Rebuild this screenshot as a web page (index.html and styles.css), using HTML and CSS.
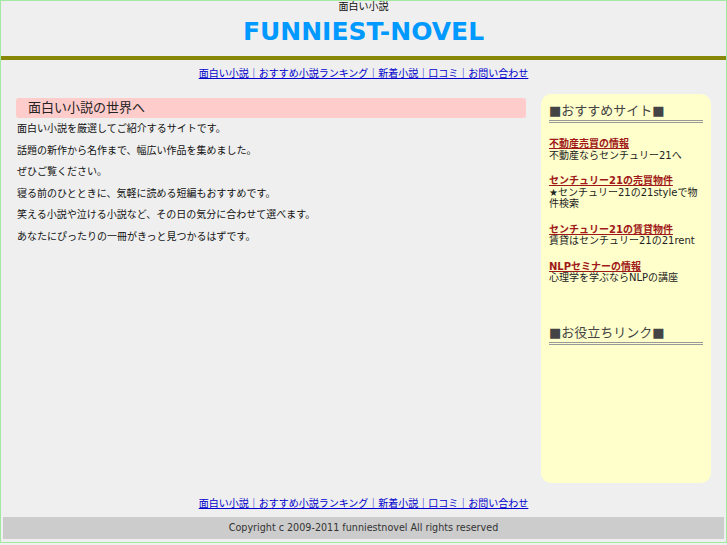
FILE: index.html
```html
<!DOCTYPE html>
<html lang="ja">
<head>
<meta charset="utf-8">
<title>FUNNIEST-NOVEL</title>
<link rel="stylesheet" href="styles.css">
</head>
<body>
<div class="page">
  <header class="header">
    <h1 class="tagline">面白い小説</h1>
    <div class="logo">FUNNIEST-NOVEL</div>
  </header>
  <div class="rule"></div>
  <nav class="nav"><a href="#">面白い小説｜おすすめ小説ランキング｜新着小説｜口コミ｜お問い合わせ</a></nav>
  <div class="content">
    <main class="main">
      <h2 class="main-title">面白い小説の世界へ</h2>
      <p class="text">面白い小説を厳選してご紹介するサイトです。</p>
      <p class="text">話題の新作から名作まで、幅広い作品を集めました。</p>
      <p class="text">ぜひご覧ください。</p>
      <p class="text">寝る前のひとときに、気軽に読める短編もおすすめです。</p>
      <p class="text">笑える小説や泣ける小説など、その日の気分に合わせて選べます。</p>
      <p class="text">あなたにぴったりの一冊がきっと見つかるはずです。</p>
    </main>
    <aside class="side">
      <section class="side-box">
        <h3 class="side-title">■おすすめサイト■</h3>
        <ul class="links">
          <li class="link-item"><a class="link-title" href="#">不動産売買の情報</a><br>不動産ならセンチュリー21へ</li>
          <li class="link-item"><a class="link-title" href="#">センチュリー21の売買物件</a><br>★センチュリー21の21styleで物件検索</li>
          <li class="link-item"><a class="link-title" href="#">センチュリー21の賃貸物件</a><br>賃貸はセンチュリー21の21rent</li>
          <li class="link-item"><a class="link-title" href="#">NLPセミナーの情報</a><br>心理学を学ぶならNLPの講座</li>
        </ul>
      </section>
      <section class="side-box side-box-second">
        <h3 class="side-title">■お役立ちリンク■</h3>
      </section>
    </aside>
  </div>
  <div class="foot-nav"><a href="#">面白い小説｜おすすめ小説ランキング｜新着小説｜口コミ｜お問い合わせ</a></div>
  <footer class="copyright">Copyright c 2009-2011 funniestnovel All rights reserved</footer>
</div>
</body>
</html>
```
FILE: styles.css
```css
html, body {
  margin: 0;
  padding: 0;
  background: #efefef;
}
body {
  font-family: "DejaVu Sans", "Noto Sans CJK JP", sans-serif;
  color: #111;
}
.page {
  box-sizing: border-box;
  width: 727px;
  border: 1px solid #a3e8a3;
  background: #efefef;
}
.header {
  text-align: center;
}
.tagline {
  margin: 0;
  font-size: 10px;
  line-height: 12px;
  font-weight: normal;
  color: #111;
}
.logo {
  margin-top: 4px;
  font-size: 25px;
  line-height: 30px;
  font-weight: bold;
  color: #0099ff;
}
.rule {
  margin-top: 9px;
  height: 4px;
  background: #888808;
}
.nav, .foot-nav {
  text-align: center;
  font-size: 10px;
  line-height: 12px;
}
.nav {
  margin-top: 8px;
}
.nav a, .foot-nav a {
  color: #0000cc;
}
.content {
  display: flex;
  gap: 15px;
  margin-top: 14px;
  padding: 0 15px;
}
.main {
  width: 510px;
  padding-top: 4px;
}
.main-title {
  margin: 0;
  height: 20px;
  padding-left: 12px;
  background: #ffcccc;
  border-radius: 3px;
  font-size: 13px;
  line-height: 20px;
  font-weight: normal;
  color: #222;
}
.text {
  margin: 0;
  padding-left: 1px;
  font-size: 10px;
  line-height: 21.5px;
  color: #111;
}
.side {
  box-sizing: border-box;
  width: 170px;
  height: 389px;
  padding: 8px 8px 0;
  background: #ffffcc;
  border-radius: 10px;
}
.side-title {
  margin: 0;
  font-size: 13px;
  line-height: 18px;
  font-weight: normal;
  color: #444;
  border-bottom: 3px double #999;
}
.side-box-second {
  margin-top: 40px;
}
.links {
  list-style: none;
  margin: 15px 0 0;
  padding: 0;
  font-size: 10px;
  line-height: 11.5px;
  color: #222;
}
.link-item {
  margin-bottom: 14px;
}
.link-item:last-child {
  margin-bottom: 0;
}
.link-title {
  color: #a01818;
  font-weight: bold;
}
.foot-nav {
  margin-top: 15px;
}
.copyright {
  margin: 7px 2px 3px;
  height: 22px;
  background: #cccccc;
  text-align: center;
  font-size: 9.6px;
  line-height: 22px;
  color: #333;
}
```
